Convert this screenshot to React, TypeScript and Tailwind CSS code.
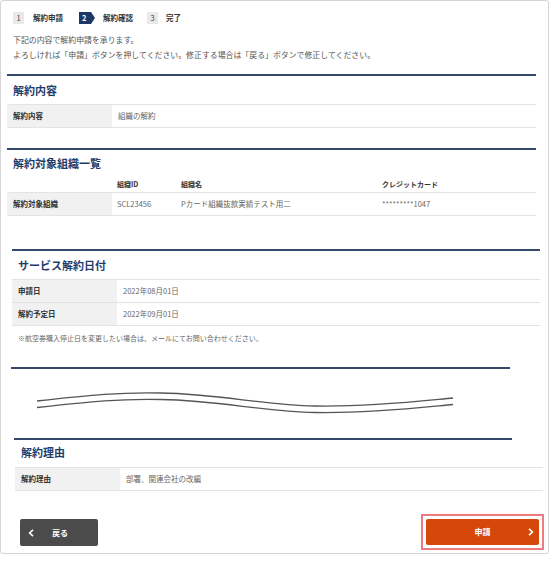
import React from "react";

const font = { fontFamily: '"Noto Sans CJK JP", "Noto Sans", sans-serif' };

function Line({ cls }: { cls: string }) {
  return <div className={`h-[2px] bg-[#34496a] ${cls}`} />;
}

function Row({ label, value, labelW = "w-[105px]" }: { label: string; value: string; labelW?: string }) {
  return (
    <div className="flex h-[23px] border-t border-[#e3e3e3]">
      <div className={`${labelW} shrink-0 bg-[#f1f1f1] flex items-center pl-[6px] text-[7.5px] font-bold text-[#333]`}>{label}</div>
      <div className="flex items-center pl-[6px] text-[7.5px] text-[#666]">{value}</div>
    </div>
  );
}

export default function App() {
  return (
    <div className="bg-white w-[555px] h-[563px]" style={font}>
      <div className="w-[549px] h-[554px] border border-[#d4d4d4] rounded-[3px] flex flex-col">
        {/* steps */}
        <div className="mt-[11px] ml-[12px] flex items-center h-[12px] text-[7.5px] font-bold text-[#333]">
          <div className="w-[11px] h-[12px] bg-[#e9e9e9] flex items-center justify-center font-normal text-[#444]">1</div>
          <div className="ml-[9px]">解約申請</div>
          <div className="ml-[16px] w-[16px] h-[12px] relative">
            <svg width="16" height="12" viewBox="0 0 16 12" className="absolute inset-0">
              <polygon points="0,0 12,0 16,6 12,12 0,12" fill="#1d3766" />
            </svg>
            <span className="absolute left-[3px] top-0 h-[12px] flex items-center text-white">2</span>
          </div>
          <div className="ml-[8px]">解約確認</div>
          <div className="ml-[14px] w-[11px] h-[12px] bg-[#e9e9e9] flex items-center justify-center font-normal text-[#444]">3</div>
          <div className="ml-[8px]">完了</div>
        </div>
        {/* instructions */}
        <div className="mt-[8px] ml-[12px] text-[7.9px] leading-[15px] text-[#555]">
          <div>下記の内容で解約申請を承ります。</div>
          <div>よろしければ「申請」ボタンを押してください。修正する場合は「戻る」ボタンで修正してください。</div>
        </div>

        {/* section 1 */}
        <div className="mt-[12px] ml-[6px] w-[529px]">
          <Line cls="" />
          <div className="h-[28px] flex items-center pl-[6px] text-[11px] font-bold text-[#1f3d6b]">解約内容</div>
          <div className="border-b border-[#e3e3e3]">
            <Row label="解約内容" value="組織の解約" />
          </div>
        </div>

        {/* section 2 */}
        <div className="mt-[20px] ml-[6px] w-[529px]">
          <Line cls="" />
          <div className="h-[26px] flex items-center pl-[6px] text-[11px] font-bold text-[#1f3d6b]">解約対象組織一覧</div>
          <div className="flex h-[16px] items-center text-[7px] font-bold text-[#333]">
            <div className="w-[105px]" />
            <div className="w-[64px] pl-[5px]">組織ID</div>
            <div className="w-[201px] pl-[5px]">組織名</div>
            <div className="pl-[5px]">クレジットカード</div>
          </div>
          <div className="flex h-[24px] border-t border-b border-[#e3e3e3] text-[7.5px]">
            <div className="w-[105px] shrink-0 bg-[#f1f1f1] flex items-center pl-[6px] font-bold text-[#333]">解約対象組織</div>
            <div className="w-[64px] flex items-center pl-[5px] text-[#666]">SCL23456</div>
            <div className="w-[201px] flex items-center pl-[5px] text-[#666]">Pカード組織抜款実績テスト用二</div>
            <div className="flex items-center pl-[5px] text-[#666]">*********1047</div>
          </div>
        </div>

        {/* section 3 */}
        <div className="mt-[33px] ml-[11px] w-[528px]">
          <Line cls="" />
          <div className="h-[28px] flex items-center pl-[6px] text-[11px] font-bold text-[#1f3d6b]">サービス解約日付</div>
          <div className="border-b border-[#e3e3e3]">
            <Row label="申請日" value="2022年08月01日" />
            <Row label="解約予定日" value="2022年09月01日" />
          </div>
          <div className="h-[24px] flex items-center pl-[6px] text-[7px] text-[#666]">※航空券購入停止日を変更したい場合は、メールにてお問い合わせください。</div>
        </div>

        {/* omission */}
        <div className="mt-[17px] ml-[10px] w-[499px]">
          <Line cls="" />
        </div>
        <div className="h-[69px]">
          <svg width="547" height="69" viewBox="0 0 547 69">
            <path d="M36,32 C90,26 120,23 160,24 C220,25 260,36 314,37 C370,38 420,32 452,29" fill="none" stroke="#555" strokeWidth="1.3" />
            <path d="M36,38.5 C90,32.5 120,29.5 160,30.5 C220,31.5 260,42.5 314,43.5 C370,44.5 420,38.5 452,35.5" fill="none" stroke="#555" strokeWidth="1.3" />
          </svg>
        </div>
        <div className="ml-[13px] w-[498px]">
          <Line cls="" />
        </div>

        {/* section 4 */}
        <div className="ml-[14px] w-[528px]">
          <div className="h-[24px] flex items-center pl-[6px] text-[11px] font-bold text-[#1f3d6b]">解約理由</div>
          <div className="mt-[3px] border-b border-[#e3e3e3]">
            <Row label="解約理由" value="部署、関連会社の改編" />
          </div>
        </div>

        {/* buttons */}
        <div className="mt-[23px] flex items-start justify-between pl-[19px] pr-[4px]">
          <div className="mt-[5px] w-[78px] h-[27px] bg-[#4b4b4b] rounded-[2px] flex items-center text-white text-[8px] font-bold">
            <svg width="6" height="8" viewBox="0 0 6 8" className="ml-[8px]">
              <path d="M5,0.8 L1.6,4 L5,7.2" fill="none" stroke="white" strokeWidth="1.6" />
            </svg>
            <span className="ml-[18px]">戻る</span>
          </div>
          <div className="w-[123px] h-[36px] border-2 border-[#ef7b82] p-[3px]">
            <div className="w-full h-full bg-[#d5470b] rounded-[2px] flex items-center relative text-white text-[8px] font-bold">
              <span className="absolute left-0 right-0 text-center">申請</span>
              <svg width="6" height="8" viewBox="0 0 6 8" className="absolute right-[5px]">
                <path d="M1,0.8 L4.4,4 L1,7.2" fill="none" stroke="white" strokeWidth="1.6" />
              </svg>
            </div>
          </div>
        </div>
      </div>
    </div>
  );
}
